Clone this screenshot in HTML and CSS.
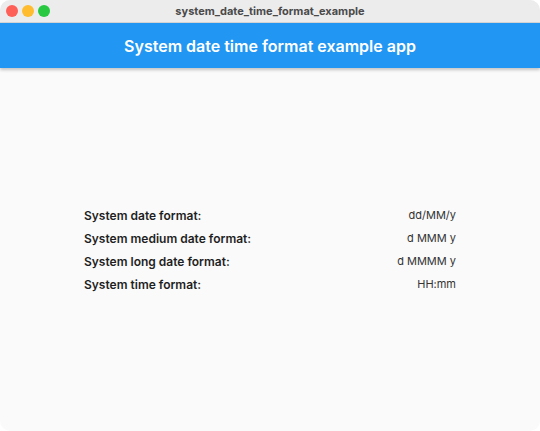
FILE: index.html
```html
<!DOCTYPE html>
<html>
<head>
<meta charset="utf-8">
<link rel="stylesheet" href="styles.css">
</head>
<body>
<div class="window">
  <div class="titlebar">
    <div class="lights">
      <span class="light red"></span>
      <span class="light yellow"></span>
      <span class="light green"></span>
    </div>
    <div class="wintitle">system_date_time_format_example</div>
  </div>
  <div class="appbar">System date time format example app</div>
  <div class="content">
    <div class="table">
      <div class="label">System date format:</div><div class="value">dd/MM/y</div>
      <div class="label">System medium date format:</div><div class="value">d MMM y</div>
      <div class="label">System long date format:</div><div class="value">d MMMM y</div>
      <div class="label">System time format:</div><div class="value">HH:mm</div>
    </div>
  </div>
</div>
</body>
</html>
```

FILE: styles.css
```css
html, body {
  margin: 0;
  padding: 0;
  background: #ffffff;
}
body {
  width: 540px;
  height: 431px;
  overflow: hidden;
  font-family: Inter, "Liberation Sans", sans-serif;
}
.window {
  width: 540px;
  height: 431px;
  border-radius: 10px;
  overflow: hidden;
  display: flex;
  flex-direction: column;
  background: #fafafa;
}
.titlebar {
  height: 22px;
  flex: 0 0 22px;
  background: #ececec;
  border-bottom: 1px solid #d6d6d6;
  display: flex;
  align-items: center;
  justify-content: center;
  position: relative;
}
.lights {
  position: absolute;
  left: 6px;
  top: 5px;
  display: flex;
  gap: 4px;
}
.light {
  width: 12px;
  height: 12px;
  border-radius: 50%;
  display: block;
}
.red { background: #fe5f57; }
.yellow { background: #febc2e; }
.green { background: #28c840; }
.wintitle {
  font-size: 11px;
  font-weight: 700;
  color: #4a4a4a;
}
.appbar {
  height: 45px;
  flex: 0 0 45px;
  background: #2196f3;
  color: #ffffff;
  font-size: 16px;
  font-weight: 600;
  display: flex;
  align-items: center;
  justify-content: center;
  box-shadow: 0 2px 3px rgba(0,0,0,0.22);
  position: relative;
  z-index: 1;
}
.content {
  flex: 1;
  display: flex;
  align-items: center;
  justify-content: center;
}
.table {
  width: 372px;
  display: grid;
  grid-template-columns: 1fr auto;
  grid-auto-rows: 23px;
  align-items: center;
  font-size: 12px;
}
.label {
  font-weight: 600;
  color: #1f1f1f;
}
.value {
  text-align: right;
  font-size: 11px;
  color: #333333;
}
```
